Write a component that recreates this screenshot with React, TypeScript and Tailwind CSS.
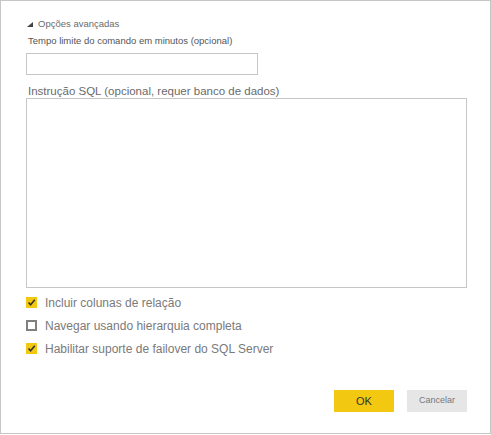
import { useState } from 'react';

// Advanced options panel for a SQL Server connection dialog
const CheckRow = ({ label, checked, onToggle }: { label: string; checked: boolean; onToggle: () => void }) => (
  <button type="button" onClick={onToggle} className="flex items-center h-[23px] text-left">
    {checked ? (
      <span className="w-[11px] h-[11px] bg-[#f2c811] flex items-center justify-center">
        <svg width="9" height="9" viewBox="0 0 9 9">
          <path d="M1.5 4.5 L3.6 6.8 L7.8 1.8" fill="none" stroke="#333" strokeWidth="1.6" />
        </svg>
      </span>
    ) : (
      <span className="w-[11px] h-[11px] border-2 border-[#808080] bg-white" />
    )}
    <span className="ml-[8px] text-[12px] text-[#7a7a7a]">{label}</span>
  </button>
);

const App = () => {
  const [timeout, setTimeoutValue] = useState('');
  const [sql, setSql] = useState('');
  const [opts, setOpts] = useState({ relations: true, hierarchy: false, failover: true });

  const toggle = (key: keyof typeof opts) => setOpts({ ...opts, [key]: !opts[key] });

  return (
    <div className="bg-white w-[491px] h-[435px]" style={{ fontFamily: '"Liberation Sans", Arial, sans-serif' }}>
      <div className="w-[491px] h-[434px] border border-[#c6c6c6] flex flex-col pl-[25px] pr-[23px] pt-[16px]">
        <div className="flex items-center h-[14px]">
          <svg width="6" height="5" viewBox="0 0 6 5" className="ml-[1px]">
            <polygon points="6,0 6,5 0,5" fill="#444" />
          </svg>
          <span className="ml-[5px] text-[9.5px] text-[#6b6b6b]">Opções avançadas</span>
        </div>

        <label className="mt-[3px] ml-[2px] text-[9.5px] text-[#555] leading-[14px]">
          Tempo limite do comando em minutos (opcional)
        </label>
        <input
          value={timeout}
          onChange={(e) => setTimeoutValue(e.target.value)}
          className="mt-[5px] w-[232px] h-[22px] border border-[#c6c6c6] outline-none px-1 text-[11px]"
        />

        <label className="mt-[9px] ml-[2px] text-[11.5px] text-[#6b6b6b] leading-[14px]">
          Instrução SQL (opcional, requer banco de dados)
        </label>
        <textarea
          value={sql}
          onChange={(e) => setSql(e.target.value)}
          className="mt-[0px] w-[441px] h-[190px] border border-[#c6c6c6] outline-none resize-none p-1 text-[11px]"
        />

        <div className="mt-[3px] flex flex-col items-start">
          <CheckRow label="Incluir colunas de relação" checked={opts.relations} onToggle={() => toggle('relations')} />
          <CheckRow label="Navegar usando hierarquia completa" checked={opts.hierarchy} onToggle={() => toggle('hierarchy')} />
          <CheckRow label="Habilitar suporte de failover do SQL Server" checked={opts.failover} onToggle={() => toggle('failover')} />
        </div>

        <div className="mt-auto mb-[21px] flex justify-end gap-[13px]">
          <button className="w-[60px] h-[22px] bg-[#f2c811] text-[11px] text-[#333]">OK</button>
          <button className="w-[60px] h-[22px] bg-[#e6e6e6] text-[9px] text-[#777]">Cancelar</button>
        </div>
      </div>
    </div>
  );
};

export default App;
